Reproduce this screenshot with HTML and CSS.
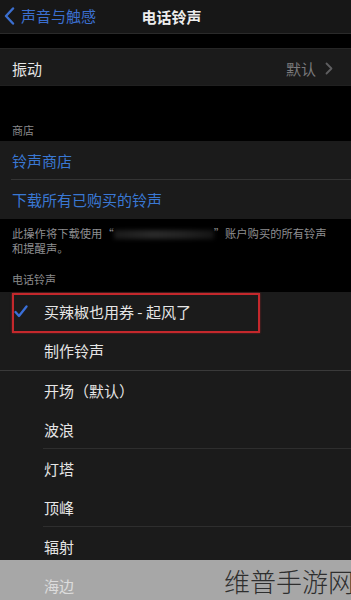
FILE: index.html
```html
<!DOCTYPE html>
<html lang="zh">
<head>
<meta charset="utf-8">
<link rel="stylesheet" href="styles.css">
</head>
<body>
<div class="screen">
  <div class="nav">
    <div class="back">
      <svg class="chev" width="11" height="18" viewBox="0 0 11 18"><path d="M9 1.5 L2 9 L9 16.5" fill="none" stroke="#3b6fd0" stroke-width="2.4" stroke-linecap="round" stroke-linejoin="round"/></svg>
      <span>声音与触感</span>
    </div>
    <div class="title">电话铃声</div>
  </div>
  <div class="gap-top"></div>
  <div class="group">
    <div class="row row-vib">
      <span class="label">振动</span>
      <span class="detail">默认<svg class="disc" width="8" height="13" viewBox="0 0 8 13"><path d="M1.5 1.5 L6.5 6.5 L1.5 11.5" fill="none" stroke="#5e5e60" stroke-width="1.8" stroke-linecap="round" stroke-linejoin="round"/></svg></span>
    </div>
  </div>
  <div class="header header-store">商店</div>
  <div class="group">
    <div class="row tall blue sep">铃声商店</div>
    <div class="row tall blue">下载所有已购买的铃声</div>
  </div>
  <div class="footer">此操作将下载使用“<span class="masked"></span>”账户购买的所有铃声和提醒声。</div>
  <div class="header header-tones">电话铃声</div>
  <div class="group list">
    <div class="row tone selected">
      <svg class="check" width="14" height="13" viewBox="0 0 14 13"><path d="M1.5 7 L5 11 L12.5 1.5" fill="none" stroke="#3a6fd8" stroke-width="2.3" stroke-linecap="round" stroke-linejoin="round"/></svg>
      <span>买辣椒也用券 - 起风了</span>
      <div class="highlight"></div>
    </div>
    <div class="row tone">制作铃声</div>
    <div class="divider"></div>
    <div class="row tone">开场（默认）</div>
    <div class="row tone isep">波浪</div>
    <div class="row tone">灯塔</div>
    <div class="row tone isep">顶峰</div>
    <div class="row tone">辐射</div>
    <div class="row tone">海边</div>
  </div>
  <div class="watermark"><span>维普手游网</span></div>
</div>
</body>
</html>
```

FILE: styles.css
```css
* { box-sizing: border-box; }
html, body { margin: 0; padding: 0; background: #000; }
body {
  font-family: "Noto Sans CJK SC", "Noto Sans", sans-serif;
  color: #e6e6e6;
  width: 351px;
  height: 600px;
  overflow: hidden;
}
.screen { position: relative; width: 351px; height: 600px; overflow: hidden; background: #000; }

.nav {
  position: relative;
  height: 34px;
  background: #171717;
  border-bottom: 1px solid #2a2a2a;
  display: flex;
  align-items: center;
}
.back {
  display: flex;
  align-items: center;
  gap: 6px;
  padding-left: 4px;
  padding-bottom: 2px;
  color: #3b6fd0;
  font-size: 15px;
  line-height: 18px;
}
.title {
  position: absolute;
  left: 0; right: 8px; top: 0;
  height: 32px;
  display: flex;
  align-items: center;
  justify-content: center;
  font-size: 15px;
  font-weight: 600;
  color: #ececec;
  pointer-events: none;
}

.gap-top { height: 14px; background: #000; }

.group { background: #1b1b1b; }
.row {
  display: flex;
  align-items: center;
  height: 36px;
  padding-left: 12px;
  font-size: 15px;
  color: #e6e6e6;
}
.row-vib { height: 38px; padding-top: 2px; justify-content: space-between; padding-right: 18px; border-top: 1px solid #262626; border-bottom: 1px solid #202020; }
.detail { display: flex; align-items: center; gap: 9px; color: #7a7a7c; }
.tall { height: 39px; }
.blue { color: #3a78d4; }
.sep { position: relative; }
.sep::after {
  content: "";
  position: absolute;
  left: 11px; right: 0; bottom: 0;
  height: 1px;
  background: #343434;
}

.header {
  font-size: 11px;
  line-height: 14px;
  color: #8a8a8c;
  padding-left: 12px;
}
.header-store { padding-top: 37px; padding-bottom: 4px; }
.header-tones { padding-top: 16px; padding-bottom: 6px; }

.footer {
  font-size: 11.3px;
  line-height: 15px;
  color: #8e8e90;
  padding: 7px 20px 0 12px;
}
.masked {
  display: inline-block;
  width: 100px;
  height: 9px;
  vertical-align: -1px;
  background: linear-gradient(90deg, #1a1a1a, #2a2a2a 40%, #222 70%, #141414);
  filter: blur(2px);
}

.list .row { height: 39px; }
.tone { padding-left: 44px; position: relative; }
.selected .check { position: absolute; left: 14px; top: 13px; }
.highlight {
  position: absolute;
  left: 12px; top: 1px;
  width: 248px; height: 40px;
  border: 2px solid #c4282c;
  box-shadow: 0 0 2px rgba(196,40,44,0.6);
}
.divider { height: 1px; background: #3a3a3a; }
.isep { position: relative; }
.isep::after {
  content: "";
  position: absolute;
  left: 43px; right: 0; bottom: 0;
  height: 1px;
  background: #2e2e2e;
}

.watermark {
  position: absolute;
  left: 0; right: 0; top: 560px; bottom: 0;
  background: rgba(216,216,216,0.745);
  display: flex;
  align-items: center;
  padding-left: 224px;
  white-space: nowrap;
}
.watermark span {
  font-size: 26px;
  font-weight: 300;
  color: #2e2e2e;
  letter-spacing: 0px;
  line-height: 30px;
  margin-top: 2px;
}
```
